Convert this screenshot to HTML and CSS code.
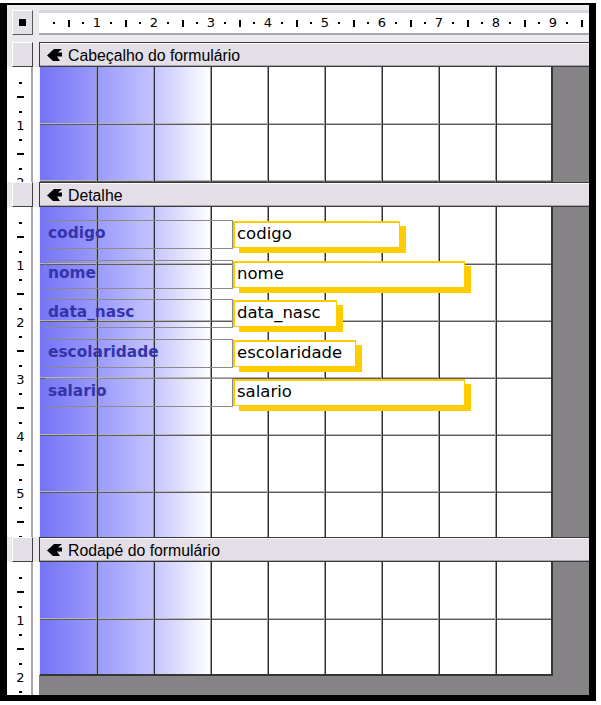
FILE: index.html
```html
<!DOCTYPE html>
<html lang="pt">
<head>
<meta charset="utf-8">
<title>Formulário - Modo Design</title>
<link rel="stylesheet" href="styles.css">
</head>
<body>
<div class="window">
  <div class="corner-cell"><div class="corner"><span class="corner-sq"></span></div></div>
  <div class="hruler-cell">
    <div class="hruler">
      <i class="d"></i><i class="t"></i><i class="d"></i><b class="n">1</b>
      <i class="d"></i><i class="t"></i><i class="d"></i><b class="n">2</b>
      <i class="d"></i><i class="t"></i><i class="d"></i><b class="n">3</b>
      <i class="d"></i><i class="t"></i><i class="d"></i><b class="n">4</b>
      <i class="d"></i><i class="t"></i><i class="d"></i><b class="n">5</b>
      <i class="d"></i><i class="t"></i><i class="d"></i><b class="n">6</b>
      <i class="d"></i><i class="t"></i><i class="d"></i><b class="n">7</b>
      <i class="d"></i><i class="t"></i><i class="d"></i><b class="n">8</b>
      <i class="d"></i><i class="t"></i><i class="d"></i><b class="n">9</b>
      <i class="d"></i><i class="t"></i>
    </div>
  </div>

  <div class="vbox-cell"><div class="vbox"></div></div>
  <div class="sechead">
    <svg class="sel" width="15" height="12" viewBox="0 0 15 12"><path d="M0 6.5 L7 0 H15 L11 3.5 H15 V7.5 H10 L13 12 H6 Z" fill="#000"/></svg>
    <span>Cabeçalho do formulário</span>
  </div>

  <div class="vr-cell">
    <div class="vruler">
      <i class="d"></i><i class="h"></i><i class="d"></i><b class="n">1</b>
      <i class="d"></i><i class="h"></i><i class="d"></i><b class="n">2</b>
    </div>
  </div>
  <div class="area">
    <div class="canvas"></div>
    <div class="gutter"></div>
  </div>

  <div class="vbox-cell"><div class="vbox"></div></div>
  <div class="sechead">
    <svg class="sel" width="15" height="12" viewBox="0 0 15 12"><path d="M0 6.5 L7 0 H15 L11 3.5 H15 V7.5 H10 L13 12 H6 Z" fill="#000"/></svg>
    <span>Detalhe</span>
  </div>

  <div class="vr-cell">
    <div class="vruler">
      <i class="d"></i><i class="h"></i><i class="d"></i><b class="n">1</b>
      <i class="d"></i><i class="h"></i><i class="d"></i><b class="n">2</b>
      <i class="d"></i><i class="h"></i><i class="d"></i><b class="n">3</b>
      <i class="d"></i><i class="h"></i><i class="d"></i><b class="n">4</b>
      <i class="d"></i><i class="h"></i><i class="d"></i><b class="n">5</b>
      <i class="d"></i><i class="h"></i><i class="d"></i>
    </div>
  </div>
  <div class="area">
    <div class="canvas">
      <div class="controls">
        <div class="ctl"><div class="lbl">codigo</div><div class="txt w-codigo">codigo</div></div>
        <div class="ctl"><div class="lbl">nome</div><div class="txt w-nome">nome</div></div>
        <div class="ctl"><div class="lbl">data_nasc</div><div class="txt w-data">data_nasc</div></div>
        <div class="ctl"><div class="lbl">escolaridade</div><div class="txt w-esc">escolaridade</div></div>
        <div class="ctl"><div class="lbl">salario</div><div class="txt w-sal">salario</div></div>
      </div>
    </div>
    <div class="gutter"></div>
  </div>

  <div class="vbox-cell"><div class="vbox"></div></div>
  <div class="sechead">
    <svg class="sel" width="15" height="12" viewBox="0 0 15 12"><path d="M0 6.5 L7 0 H15 L11 3.5 H15 V7.5 H10 L13 12 H6 Z" fill="#000"/></svg>
    <span>Rodapé do formulário</span>
  </div>

  <div class="vr-cell vr-last">
    <div class="vruler">
      <i class="d"></i><i class="h"></i><i class="d"></i><b class="n">1</b>
      <i class="d"></i><i class="h"></i><i class="d"></i><b class="n">2</b>
      <i class="d"></i>
    </div>
  </div>
  <div class="area area-last">
    <div class="canvas canvas-last"></div>
    <div class="gutter"></div>
  </div>
  <div class="bottom-grey"></div>
</div>
</body>
</html>
```

FILE: styles.css
```css
* { box-sizing: border-box; }
html, body { margin: 0; padding: 0; background: #fff; }
body { font-family: "DejaVu Sans", sans-serif; }

.window {
  margin-top: 3px;
  width: 596px;
  border-left: 7px solid #000;
  border-right: 7px solid #000;
  border-top: 2px solid #000;
  border-bottom: 6px solid #000;
  background: #ebe8ee;
  display: grid;
  grid-template-columns: 32px 550px;
  grid-template-rows: 37px 25px 115px 25px 330px 25px 114px 19px;
}

/* top ruler row */
.corner-cell { padding: 5px 0 0 5px; }
.corner {
  width: 21px;
  height: 25px;
  background: #e4e0e8;
  border: 1px solid;
  border-color: #fff #5a5a5a #5a5a5a #fff;
  display: flex;
  align-items: center;
  justify-content: center;
}
.corner-sq { width: 7px; height: 7px; background: #000; }

.hruler-cell { padding-top: 5px; }
.hruler {
  height: 25px;
  background: #fff;
  border-top: 3px solid #d9d5dd;
  border-bottom: 2px solid #a9a5ad;
  display: flex;
  align-items: center;
  padding-left: 8.125px;
}
.hruler > * {
  flex: 0 0 14.25px;
  display: flex;
  justify-content: center;
  align-items: center;
}
.hruler .d::before { content: ""; width: 2px; height: 2px; background: #000; }
.hruler .t::before { content: ""; width: 2px; height: 7px; background: #000; }
.n {
  font-family: "DejaVu Sans", sans-serif;
  font-weight: normal;
  font-size: 13px;
  line-height: 14.25px;
  color: #000;
}

/* section header rows */
.vbox-cell { padding-left: 5px; }
.vbox {
  width: 21px;
  height: 25px;
  background: #e4e0e8;
  border: 1px solid;
  border-color: #fff #404040 #404040 #fff;
}
.sechead {
  background: #e4dfe7;
  border-top: 1px solid #3a3a3a;
  border-bottom: 1px solid #3a3a3a;
  border-left: 1px solid #3a3a3a;
  box-shadow: inset 0 1px 0 #fbfafc, inset 0 -1px 0 #aaa6ae;
  display: flex;
  align-items: center;
  padding: 3px 0 0 7px;
  gap: 6px;
  font-family: "Liberation Sans", Arial, sans-serif;
  font-size: 15.8px;
  color: #000;
}
.sel { flex: 0 0 auto; margin-top: -2px; }

/* vertical ruler */
.vr-cell { background: #fff; overflow: hidden; }
.vr-last { grid-row: span 2; }
.vruler {
  width: 26px;
  height: 100%;
  border-right: 2px solid #aaa6ae;
  padding: 9px 0 0 3px;
  display: flex;
  flex-direction: column;
  overflow: hidden;
}
.vruler > * {
  flex: 0 0 14.25px;
  display: flex;
  justify-content: center;
  align-items: center;
}
.vruler .d::before { content: ""; width: 3px; height: 2px; background: #000; }
.vruler .h::before { content: ""; width: 7px; height: 2px; background: #000; }

/* design surface */
.area { display: flex; overflow: hidden; }
.canvas {
  width: 514px;
  height: 100%;
  border-left: 1px solid #f2f2f2;
  border-right: 2px solid #353535;
  background:
    repeating-linear-gradient(to right, transparent 0 55px, #9a9a9a 55px 56px, #2e2e36 56px 57px) 1px 0,
    repeating-linear-gradient(to bottom, transparent 0 55px, #b4b4b4 55px 56px, #5c5c5c 56px 57px) 0 1px,
    linear-gradient(to right, #7474f6 0, #9a9afc 57px, #c4c4fe 114px, #ffffff 171px) 0 0 / 171px 100% no-repeat,
    #fff;
}
.canvas-last { border-bottom: 2px solid #353535; }
.gutter { flex: 1; background: #858385; }
.bottom-grey { background: #858385; }

/* controls */
.controls {
  display: flex;
  flex-direction: column;
  gap: 10.5px;
  padding: 13px 0 0 5px;
}
.ctl { display: flex; height: 29px; }
.lbl {
  width: 188px;
  height: 29px;
  border: 1px solid #8a8a8a;
  padding-left: 2px;
  font-family: "DejaVu Sans", sans-serif;
  font-weight: bold;
  font-size: 15.4px;
  line-height: 24px;
  color: #3434aa;
  white-space: nowrap;
}
.txt {
  margin-top: 1px;
  height: 27px;
  border: 2px solid #ffcc00;
  border-right-width: 1px;
  border-bottom-width: 1px;
  background: #fff;
  box-shadow: 6px 5px 0 #ffcc00;
  padding-left: 2px;
  font-family: "DejaVu Sans", sans-serif;
  font-size: 16.5px;
  line-height: 22px;
  color: #000;
  white-space: nowrap;
}
.w-codigo { width: 167px; }
.w-nome { width: 232px; }
.w-data { width: 104px; }
.w-esc { width: 123px; }
.w-sal { width: 232px; }
```
